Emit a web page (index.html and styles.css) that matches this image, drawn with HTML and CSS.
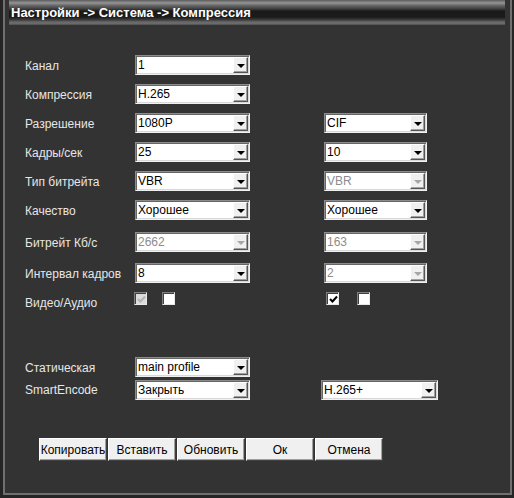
FILE: index.html
```html
<!DOCTYPE html>
<html lang="ru">
<head>
  <meta charset="UTF-8" />
  <title>Компрессия</title>
  <link rel="stylesheet" href="styles.css">
</head>
<body>
  <div class="panel">
    <div class="titlebar">Настройки -&gt; Система -&gt; Компрессия</div>

    <div class="form">
      <div class="row first">
        <div class="label">Канал</div>
        <div class="combo"><span>1</span><i class="arrow"></i></div>
      </div>
      <div class="row">
        <div class="label">Компрессия</div>
        <div class="combo"><span>H.265</span><i class="arrow"></i></div>
      </div>
      <div class="row">
        <div class="label">Разрешение</div>
        <div class="combo"><span>1080P</span><i class="arrow"></i></div>
        <div class="combo extra"><span>CIF</span><i class="arrow"></i></div>
      </div>
      <div class="row">
        <div class="label">Кадры/сек</div>
        <div class="combo"><span>25</span><i class="arrow"></i></div>
        <div class="combo extra"><span>10</span><i class="arrow"></i></div>
      </div>
      <div class="row">
        <div class="label">Тип битрейта</div>
        <div class="combo"><span>VBR</span><i class="arrow"></i></div>
        <div class="combo extra disabled"><span>VBR</span><i class="arrow"></i></div>
      </div>
      <div class="row">
        <div class="label">Качество</div>
        <div class="combo"><span>Хорошее</span><i class="arrow"></i></div>
        <div class="combo extra"><span>Хорошее</span><i class="arrow"></i></div>
      </div>
      <div class="row bitrate">
        <div class="label">Битрейт Кб/с</div>
        <div class="combo disabled"><span>2662</span><i class="arrow"></i></div>
        <div class="combo extra disabled"><span>163</span><i class="arrow"></i></div>
      </div>
      <div class="row interval">
        <div class="label">Интервал кадров</div>
        <div class="combo"><span>8</span><i class="arrow"></i></div>
        <div class="combo extra disabled"><span>2</span><i class="arrow"></i></div>
      </div>
      <div class="row checks">
        <div class="label">Видео/Аудио</div>
        <div class="checkgroup left">
          <span class="check checked disabled">
            <svg viewBox="0 0 9 9" width="9" height="9"><path d="M1 4 L3.5 6.5 L8 1.5" fill="none" stroke="#b4b4b4" stroke-width="2"/></svg>
          </span>
          <span class="check"></span>
        </div>
        <div class="checkgroup right">
          <span class="check checked">
            <svg viewBox="0 0 9 9" width="9" height="9"><path d="M1 4 L3.5 6.5 L8 1.5" fill="none" stroke="#000" stroke-width="2"/></svg>
          </span>
          <span class="check"></span>
        </div>
      </div>

      <div class="row profile">
        <div class="label">Статическая</div>
        <div class="combo"><span>main profile</span><i class="arrow"></i></div>
      </div>
      <div class="row smart">
        <div class="label">SmartEncode</div>
        <div class="combo"><span>Закрыть</span><i class="arrow"></i></div>
        <div class="combo wide"><span>H.265+</span><i class="arrow"></i></div>
      </div>

      <div class="buttons">
        <button>Копировать</button>
        <button>Вставить</button>
        <button>Обновить</button>
        <button>Ок</button>
        <button>Отмена</button>
      </div>
    </div>
  </div>
</body>
</html>
```

FILE: styles.css
```css
* {
  box-sizing: border-box;
}

body {
  margin: 0;
  width: 514px;
  height: 498px;
  background-color: #252525;
  font-family: "Liberation Sans", Arial, sans-serif;
  font-size: 12px;
  overflow: hidden;
}

.panel {
  margin-left: 3px;
  width: 509px;
  height: 495px;
  background-color: #333333;
  border: 2px solid #707070;
  border-top: none;
  padding-top: 0;
}

.titlebar {
  margin: 0 5px 0 4px;
  height: 25px;
  padding: 5px 0 0 2px;
  color: #ffffff;
  font-weight: bold;
  font-size: 13px;
  background: linear-gradient(to bottom,
    #5c5c5c 0px, #959595 3px, #6e6e6e 5px, #3c3c3c 9px,
    #1a1a1a 11px, #1a1a1a 17px, #3e3e3e 20px, #6a6a6a 22px,
    #6a6a6a 24px, #444444 25px);
}

.form {
  padding: 30px 0 0 20px;
}

.row {
  display: flex;
  align-items: center;
  height: 20px;
  margin-top: 9px;
}

.row.first {
  margin-top: 0;
}

.row.bitrate {
  margin-top: 12px;
}

.row.interval {
  margin-top: 11px;
}

.label {
  width: 110px;
  color: #e6e6e6;
  padding-top: 2px;
}

.combo {
  position: relative;
  width: 115px;
  height: 20px;
  background-color: #ffffff;
  border: 1px solid;
  border-color: #8c8c8c #f0f0f0 #f0f0f0 #8c8c8c;
  box-shadow: inset 1px 1px 0 #666666, inset -1px -1px 0 #d8d8d8;
  display: flex;
  align-items: center;
  padding-left: 2px;
  color: #000000;
}

.combo.extra {
  width: 103px;
  margin-left: 74px;
}

.combo.wide {
  width: 117px;
  margin-left: 71px;
}

.combo.disabled {
  color: #8c8c8c;
}

.arrow {
  position: absolute;
  right: 1px;
  top: 1px;
  width: 15px;
  height: 16px;
  background-color: #f0f0f0;
  border: 1px solid;
  border-color: #ffffff #555555 #555555 #ffffff;
  box-shadow: inset -1px -1px 0 #a0a0a0;
}

.arrow::after {
  content: "";
  position: absolute;
  left: 3px;
  top: 6px;
  border-left: 4px solid transparent;
  border-right: 4px solid transparent;
  border-top: 4px solid #000000;
}

.combo.disabled .arrow::after {
  border-top-color: #a6a6a6;
}

.checkgroup {
  display: flex;
  align-self: flex-start;
  margin-top: 0;
}

.checkgroup.left {
  margin-left: -1px;
  gap: 15px;
}

.checkgroup.right {
  margin-left: 151px;
  gap: 18px;
}

.check {
  width: 13px;
  height: 13px;
  background-color: #ffffff;
  border: 1px solid;
  border-color: #808080 #e8e8e8 #e8e8e8 #808080;
  box-shadow: inset 1px 1px 0 #404040;
  display: flex;
  align-items: center;
  justify-content: center;
  padding: 1px 0 0 1px;
}

.check.disabled {
  background-color: #dcdcdc;
}

.row.profile {
  margin-top: 45px;
}

.row.smart {
  margin-top: 3px;
}

.row.smart .label {
  margin-top: -3px;
}

.buttons {
  display: flex;
  gap: 1px;
  margin: 38px 0 0 14px;
}

.buttons button {
  width: 68px;
  height: 23px;
  padding: 0;
  background-color: #f0f0f0;
  border: 1px solid;
  border-color: #ffffff #404040 #404040 #ffffff;
  box-shadow: inset -1px -1px 0 #a0a0a0;
  font-family: "Liberation Sans", Arial, sans-serif;
  font-size: 12px;
  color: #000000;
}
```
